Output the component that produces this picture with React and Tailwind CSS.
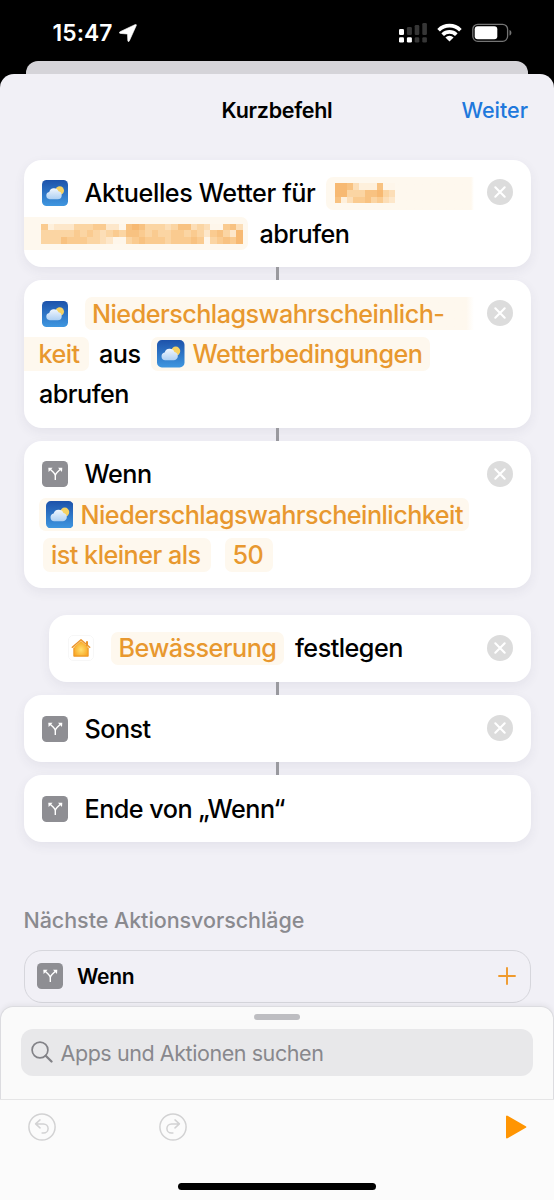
import { clsx } from "clsx";

function WeatherIcon({ className }) {
  return (
    <svg viewBox="0 0 26 26" className={clsx("shrink-0", className)}>
      <defs>
        <linearGradient id="sky" x1="0" y1="0" x2="0" y2="1">
          <stop offset="0" stopColor="#1d52aa" />
          <stop offset="1" stopColor="#3f97e0" />
        </linearGradient>
        <linearGradient id="cloud" x1="0" y1="0" x2="0" y2="1">
          <stop offset="0" stopColor="#f1f6fd" />
          <stop offset="1" stopColor="#aed0f3" />
        </linearGradient>
      </defs>
      <rect width="26" height="26" rx="4.6" fill="url(#sky)" />
      <circle cx="17.7" cy="10.5" r="4.3" fill="#f6d264" />
      <path
        d="M7.700 19.200a3.700 3.700 0 0 1-.5-7.300 4.900 4.900 0 0 1 9.300-.6 4 4 0 0 1 3.200 3.900 4 4 0 0 1-4 4z"
        fill="url(#cloud)"
      />
    </svg>
  );
}

function BranchIcon({ className }) {
  return (
    <svg viewBox="0 0 26 26" className={clsx("size-[26px] shrink-0", className)}>
      <rect width="26" height="26" rx="4.6" fill="#8e8e93" />
      <path d="M13.300 19v-4.200c0-1.500-.8-2.400-1.700-3.300L8.200 8.300M13.300 14.800c0-1.500.8-2.400 1.700-3.300l3.400-3.200" fill="none" stroke="#fff" strokeWidth="1.400" />
      <path d="M6.300 6.800h4.300L6.600 11zM20.300 6.800H16L20 11z" fill="#fff" />
    </svg>
  );
}

function HomeIcon({ className }) {
  return (
    <svg viewBox="0 0 26 26" className={clsx("size-[26px] shrink-0", className)}>
      <defs>
        <radialGradient id="house" cx=".5" cy=".6" r=".55">
          <stop offset="0" stopColor="#ffe070" />
          <stop offset="1" stopColor="#f9aa29" />
        </radialGradient>
      </defs>
      <rect x=".5" y=".5" width="25" height="25" rx="4.600" fill="#fff" stroke="#f7f7f7" />
      <path d="M18 6.200h2v5h-2z" fill="#e8912a" />
      <path d="M5.300 12.400h15.400v8.500a.8.8 0 0 1-.8.8H6.100a.8.800 0 0 1-.8-.8z" fill="#ee9722" />
      <path d="M6.400 11.500L13 6l6.600 5.500v9H6.400z" fill="url(#house)" />
      <path d="M4.300 12.300L13 4.800l8.700 7.500" fill="none" stroke="#ea942b" strokeWidth="1.500" strokeLinecap="round" strokeLinejoin="round" />
    </svg>
  );
}

function CloseButton({ className }) {
  return (
    <button className={clsx("-mt-[1.500px] size-[26px] shrink-0", className)}>
      <svg viewBox="0 0 26 26" className="size-[26px]">
        <circle cx="13" cy="13" r="13" fill="#dcdcdc" />
        <path d="M8.300 8.300l9.400 9.400M17.700 8.300l-9.400 9.400" stroke="#fff" strokeWidth="2.100" strokeLinecap="round" />
      </svg>
    </button>
  );
}

// Opacity steps per cell, 0 is empty and 9 is the full tone
const NAME_CELLS = ["7763111600", "7744466743", "6135564532"];
const STREET_CELLS = [
  "5122244455220676444346634300563",
  "4444454543454665454455454256427",
  "4446555443200456555455565045657",
];
const TONES = ["#fef6ea", "#fef0dc", "#fde7ca", "#fcdeb7", "#fbd5a3", "#facb90", "#f8c281", "#f7b972", "#f5ae61", "#f3a550"];

function Mosaic({ rows, className }) {
  return (
    <div className={clsx("flex flex-col", className)}>
      {rows.map((row, y) => (
        <div key={y} className="flex flex-1">
          {row.split("").map((level, x) => (
            <div key={x} className="flex-1" style={{ backgroundColor: TONES[level] }} />
          ))}
        </div>
      ))}
    </div>
  );
}

function Card({ className, children }) {
  return (
    <div className={clsx("shrink-0 overflow-hidden rounded-[18px] bg-white py-[13.400px] shadow-[0_4px_12px_rgba(60,60,90,0.07)]", className)}>
      {children}
    </div>
  );
}

function Row({ children }) {
  return <div className="flex h-[40.300px] items-center whitespace-nowrap">{children}</div>;
}

function Label({ className, children }) {
  return <span className={clsx("shrink-0 leading-[38px]", className)}>{children}</span>;
}

function Chip({ fade, className, children }) {
  return (
    <div
      className={clsx(
        "flex h-[33.400px] shrink-0 items-center rounded-[7px] text-[#e8982f]",
        fade ? "bg-linear-to-r from-[#fef8ee] from-98% to-white" : "bg-[#fef8ee]",
        className
      )}
    >
      {children}
    </div>
  );
}

function Connector() {
  return <div className="mx-auto h-[13px] w-[3px] shrink-0 bg-[#9a9a9f]" />;
}

function StatusBar() {
  return (
    <div className="flex h-[61px] shrink-0 items-center pt-[5px] text-white">
      <span className="ml-[52.500px] w-[66.500px] pt-px text-[22.800px] font-semibold tracking-[0.1px]">15:47</span>
      <svg viewBox="0 0 18 18" className="size-[18px]">
        <path d="M1 7.700L16.300.5c.8-.3 1.300.2 1 1L10.300 17c-.4.900-1.500.7-1.500-.3l-.3-6.200c0-.3-.2-.5-.5-.5L1.300 9.400C.2 9.300.1 8.200 1 7.700z" fill="#fff" stroke="#fff" strokeWidth=".6" />
      </svg>
      <svg viewBox="0 0 29 20" className="ml-[262px] h-5 w-[29px]">
        <g fill="#fff">
          <rect x="0" y="6" width="5" height="6" rx="1.300" />
          <rect x="0" y="14.300" width="5" height="5.200" rx="1.300" />
          <rect x="7.900" y="14.300" width="5" height="5.200" rx="1.300" />
        </g>
        <g fill="#363636">
          <rect x="7.900" y="4" width="5" height="8" rx="1.300" />
          <rect x="15.700" y="2" width="4.600" height="10" rx="1.300" />
          <rect x="23.300" y="0" width="4.600" height="12" rx="1.300" />
          <rect x="15.700" y="14.300" width="4.600" height="5.200" rx="1.300" />
          <rect x="23.300" y="14.300" width="4.600" height="5.200" rx="1.300" />
        </g>
      </svg>
      <svg viewBox="0 0 25 19" className="-mt-px ml-[9px] h-[19px] w-[25px]">
        <g fill="none" stroke="#fff" strokeWidth="3.700">
          <path d="M1.600 7.200a15.500 15.500 0 0 1 21.800 0" />
          <path d="M5.700 11.700a9.700 9.700 0 0 1 13.600 0" />
        </g>
        <path d="M12.500 18.600l-4.100-4.200a5.900 5.900 0 0 1 8.200 0z" fill="#fff" />
      </svg>
      <svg viewBox="0 0 41 20" className="ml-[10px] h-5 w-[41px]">
        <rect x=".8" y="1.300" width="34.800" height="17" rx="5" fill="none" stroke="#747474" strokeWidth="1.300" />
        <rect x="2.700" y="3.300" width="22.600" height="13" rx="3" fill="#fff" />
        <path d="M37.500 7v5.600c2.600-.8 2.600-4.800 0-5.600z" fill="#747474" />
      </svg>
    </div>
  );
}

function Suggestions() {
  return (
    <div className="mt-[64px] px-[23.500px]">
      <h2 className="flex h-7 items-center text-[21.500px] font-medium tracking-[-0.050px] whitespace-nowrap text-[#8a8a8f]">
        Nächste Aktionsvorschläge
      </h2>
      <div className="mt-[15.500px] flex h-[53px] items-center rounded-[18px] border border-[#d6d6dc] pl-[12.500px]">
        <BranchIcon />
        <span className="ml-[14px] flex-1 pt-0.5 text-[21px] font-semibold tracking-[-0.300px]">Wenn</span>
        <svg viewBox="0 0 18 18" className="mr-[13.500px] size-[18px]">
          <path d="M9 .3v17.400M.3 9h17.400" stroke="#ef9a2d" strokeWidth="1.900" />
        </svg>
      </div>
    </div>
  );
}

function SearchPanel() {
  return (
    <div className="z-10 mt-auto flex h-[92.500px] shrink-0 flex-col items-center rounded-t-[13px] border border-b-0 border-[#dcdce0] bg-[#fafafa] shadow-[0_-2px_5px_rgba(0,0,0,0.05)]">
      <div className="mt-[6.500px] h-1.5 w-[46.500px] shrink-0 rounded-full bg-[#bdbdc1]" />
      <div className="mt-[9.500px] flex h-[46.500px] w-[512px] shrink-0 items-center rounded-xl bg-[#e8e8ea] text-[#88888d]">
        <svg viewBox="0 0 22 22" className="ml-[10px] size-[22px]">
          <circle cx="9" cy="9" r="7.900" fill="none" stroke="#828287" strokeWidth="1.700" />
          <path d="M14.700 14.700L20.500 20.500" stroke="#828287" strokeWidth="2.300" strokeLinecap="round" />
        </svg>
        <span className="ml-[7.500px] pt-px text-[21.500px] tracking-[-0.430px]">Apps und Aktionen suchen</span>
      </div>
    </div>
  );
}

function ArrowCircle({ flip, className }) {
  return (
    <svg viewBox="0 0 28 28" className={clsx("size-7", flip && "-scale-x-100", className)}>
      <g fill="none" stroke="#d2d2d3" strokeWidth="1.500" strokeLinecap="round" strokeLinejoin="round">
        <circle cx="14" cy="14" r="13.100" />
        <path d="M12 6.900L7.600 10.900l4.400 4M7.800 10.900h7.700a4.400 4.400 0 0 1 0 9.200h-1.400" />
      </g>
    </svg>
  );
}

function Toolbar() {
  return (
    <div className="z-10 h-[101.500px] shrink-0 border-t border-[#e5e5e6] bg-[#fbfbfb]">
      <div className="flex h-[55px] items-center pl-[28px]">
        <ArrowCircle />
        <ArrowCircle flip className="ml-[103px]" />
        <svg viewBox="0 0 22 24" className="ml-[318px] h-6 w-[22px]">
          <path d="M2 1.500v21l18.300-10.500z" fill="#ff9502" stroke="#ff9502" strokeWidth="2" strokeLinejoin="round" />
        </svg>
      </div>
      <div className="mx-auto mt-[28.500px] h-[7px] w-[198px] rounded-full bg-black" />
    </div>
  );
}

export default function App() {
  return (
    <div className="flex h-[1200px] w-[554px] flex-col overflow-hidden bg-black font-['Inter',sans-serif] text-black">
      <StatusBar />
      <div className="mx-[26px] h-[13px] shrink-0 rounded-t-[12px] bg-[#d5d4d9]" />

      <div className="flex min-h-0 flex-1 flex-col rounded-t-[14px] bg-[#f1f0f6]">
        <div className="grid h-[73px] shrink-0 grid-cols-3 items-center text-[21.500px]">
          <span className="col-start-2 text-center font-semibold tracking-[-0.300px]">Kurzbefehl</span>
          <span className="pr-[26px] text-right font-medium text-[#2078dc]">Weiter</span>
        </div>

        <div className="mt-[12.700px] flex shrink-0 flex-col px-[23.500px] text-[25.200px] font-[460] tracking-[-0.520px]">
          <Card>
            <Row>
              <WeatherIcon className="ml-[18.500px] size-[26px]" />
              <Label className="ml-[16.500px] w-[241px] tracking-[-0.400px]">Aktuelles Wetter für</Label>
              <Chip fade className="w-[148px] rounded-r-none pl-[9.500px]">
                <Mosaic rows={NAME_CELLS} className="h-5 w-[60px]" />
              </Chip>
              <CloseButton className="ml-[13px]" />
            </Row>
            <Row>
              <Chip className="w-[224.500px] rounded-l-none pl-[17.500px]">
                <Mosaic rows={STREET_CELLS} className="h-5 w-[202px]" />
              </Chip>
              <Label className="ml-[11.500px]">abrufen</Label>
            </Row>
          </Card>
          <Connector />

          <Card>
            <Row>
              <WeatherIcon className="ml-[18.500px] size-[26px]" />
              <Chip fade className="ml-[16.500px] w-[389px] rounded-r-none pl-[7.500px]">
                <Label>Niederschlagswahrscheinlich-</Label>
              </Chip>
              <CloseButton className="ml-[13px]" />
            </Row>
            <Row>
              <Chip className="w-[65px] rounded-l-none pl-[15px]">
                <Label>keit</Label>
              </Chip>
              <Label className="ml-[10.500px] w-[52px]">aus</Label>
              <Chip className="w-[279px] pl-[6px]">
                <WeatherIcon className="size-[27.500px]" />
                <Label className="ml-[8px]">Wetterbedingungen</Label>
              </Chip>
            </Row>
            <Row>
              <Label className="ml-[15.500px]">abrufen</Label>
            </Row>
          </Card>
          <Connector />

          <Card>
            <Row>
              <BranchIcon className="ml-[18.500px]" />
              <Label className="ml-[16.500px] w-[402.500px]">Wenn</Label>
              <CloseButton />
            </Row>
            <Row>
              <Chip className="ml-[15.500px] w-[430px] pl-[6.500px]">
                <WeatherIcon className="size-[27.500px]" />
                <Label className="ml-[7.500px]">Niederschlagswahrscheinlichkeit</Label>
              </Chip>
            </Row>
            <Row>
              <Chip className="ml-[19.500px] w-[167.500px] pl-[8px]">
                <Label>ist kleiner als</Label>
              </Chip>
              <Chip className="ml-[14px] w-[48px] pl-[8px]">
                <Label>50</Label>
              </Chip>
            </Row>
          </Card>

          <Card className="mt-[26.500px] ml-[25.500px]">
            <Row>
              <HomeIcon className="ml-[19px]" />
              <Chip className="ml-[17px] w-[173px] pl-[7.500px]">
                <Label>Bewässerung</Label>
              </Chip>
              <Label className="ml-[11px] w-[191.500px]">festlegen</Label>
              <CloseButton />
            </Row>
          </Card>
          <Connector />

          <Card>
            <Row>
              <BranchIcon className="ml-[18.500px]" />
              <Label className="ml-[16.500px] w-[402.500px]">Sonst</Label>
              <CloseButton />
            </Row>
          </Card>
          <Connector />

          <Card>
            <Row>
              <BranchIcon className="ml-[18.500px]" />
              <Label className="ml-[16.500px]">Ende von „Wenn“</Label>
            </Row>
          </Card>
        </div>

        <Suggestions />
        <SearchPanel />
        <Toolbar />
      </div>
    </div>
  );
}
